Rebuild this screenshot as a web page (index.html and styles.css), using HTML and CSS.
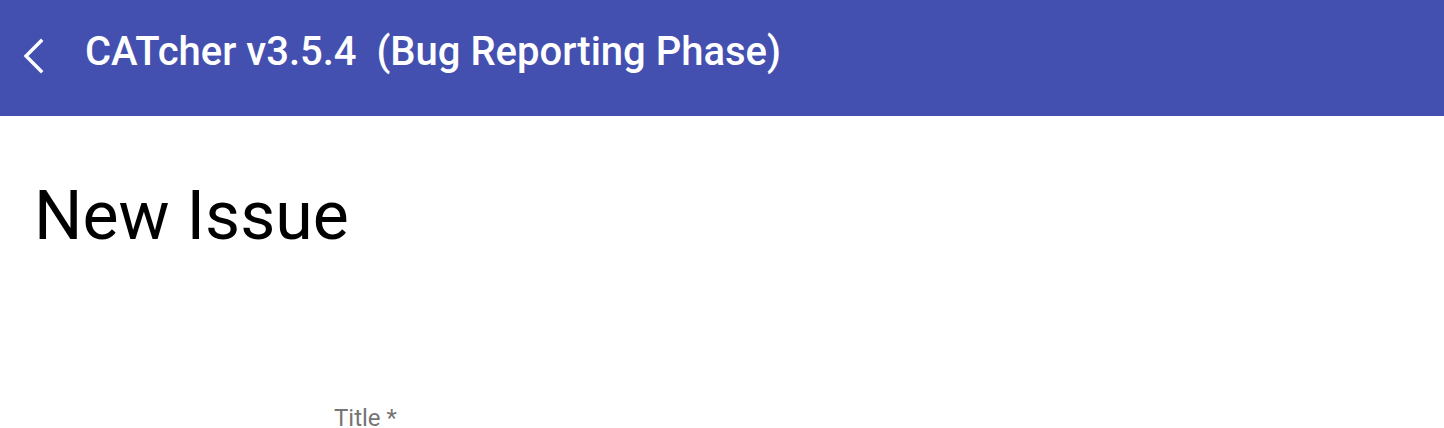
FILE: index.html
```html
<!DOCTYPE html>
<html>
<head>
<meta charset="utf-8">
<link rel="stylesheet" href="styles.css">
</head>
<body>
<header class="toolbar">
  <button class="back" aria-label="Back">
    <svg width="24" height="36" viewBox="0 0 24 36"><path d="M20 3 L5 18 L20 33" fill="none" stroke="#fff" stroke-width="3.4" stroke-linecap="square"/></svg>
  </button>
  <span class="app-title">CATcher v3.5.4&nbsp; (Bug Reporting Phase)</span>
</header>
<main class="content">
  <h1 class="page-title">New Issue</h1>
  <form class="form">
    <label class="field-label">Title *</label>
  </form>
</main>
</body>
</html>
```
FILE: styles.css
```css
html, body {
  margin: 0;
  padding: 0;
  background: #fff;
  font-family: Roboto, "Liberation Sans", sans-serif;
  overflow: hidden;
}
.toolbar {
  height: 116px;
  background: #4450b0;
  display: flex;
  align-items: center;
  padding-left: 21px;
  box-sizing: border-box;
}
.back {
  background: none;
  border: 0;
  padding: 0;
  width: 24px;
  height: 36px;
  display: flex;
  margin-top: -4px;
}
.app-title {
  color: #fff;
  font-size: 40px;
  font-weight: 500;
  margin-left: 40px;
  margin-top: -14px;
  white-space: pre;
}
.content {
  padding: 0 34px;
}
.page-title {
  margin: 0;
  padding-top: 60px;
  font-size: 68px;
  font-weight: 400;
  line-height: 80px;
  color: #000;
}
.form {
  padding-top: 148px;
  padding-left: 300px;
}
.field-label {
  font-size: 24px;
  color: #757575;
}
```
